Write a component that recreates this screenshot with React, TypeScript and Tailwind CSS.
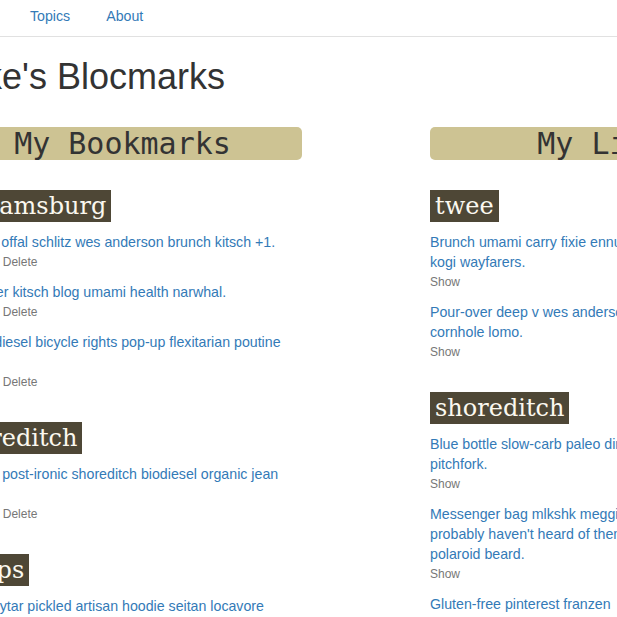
const bookmarks = [
  {
    topic: 'williamsburg',
    items: [
      'Tattooed offal schlitz wes anderson brunch kitsch +1.',
      'Typewriter kitsch blog umami health narwhal.',
      'Raw biodiesel bicycle rights pop-up flexitarian poutine tofu.',
    ],
  },
  {
    topic: 'shoreditch',
    items: ['Pitchfork post-ironic shoreditch biodiesel organic jean shorts.'],
  },
  {
    topic: 'ramps',
    items: ['Migas keytar pickled artisan hoodie seitan locavore chicharrones.'],
  },
];

const likes = [
  {
    topic: 'twee',
    items: [
      'Brunch umami carry fixie ennui tumblr letterpress cliche kogi wayfarers.',
      'Pour-over deep v wes anderson banh mi typewriter cornhole lomo.',
    ],
  },
  {
    topic: 'shoreditch',
    items: [
      'Blue bottle slow-carb paleo direct trade selvage vinyl pitchfork.',
      "Messenger bag mlkshk meggings raw denim tofu you probably haven't heard of them small batch fanny pack polaroid beard.",
      'Gluten-free pinterest franzen',
    ],
  },
];

type Group = { topic: string; items: string[] };

function Column({ title, groups, owner }: { title: string; groups: Group[]; owner: boolean }) {
  return (
    <div className="w-[359px] shrink-0">
      <h2 className="h-[33px] rounded-[5px] bg-[#cdc393] text-center font-['DejaVu_Sans_Mono',monospace] text-[30px] leading-[33px] text-[#333]">
        {title}
      </h2>
      <div className="mt-[30px]">
        {groups.map((group) => (
          <section key={group.topic} className="mb-[31px]">
            <h3 className="mb-[10px] inline-block h-[32px] bg-[#4e4736] px-[5px] font-['DejaVu_Serif',serif] text-[24px] leading-[32px] text-[#fbf8ef]">
              {group.topic}
            </h3>
            {group.items.map((item) => (
              <div key={item} className="mb-[11px]">
                <a href="#" className="block text-[14.2px] leading-[20px] text-[#337ab7]">
                  {item}
                </a>
                <div className="mt-[2px] flex gap-[4.5px] text-[12px] leading-[17px] text-[#777]">
                  <span>Show</span>
                  {owner && <span>Edit</span>}
                  {owner && <span>Delete</span>}
                </div>
              </div>
            ))}
          </section>
        ))}
      </div>
    </div>
  );
}

export default function App() {
  return (
    <div className="h-[617px] w-[617px] overflow-hidden bg-white font-['Liberation_Sans',Arial,sans-serif] text-[14px] text-[#333]">
      <nav className="flex h-[37px] items-center gap-[36px] border-b border-[#e1e1e1] pb-[4px] pl-[30px] text-[14.2px] leading-[20px]">
        <a href="#" className="text-[#337ab7]">Topics</a>
        <a href="#" className="text-[#337ab7]">About</a>
      </nav>
      <div className="ml-[-57px] w-[1000px]">
        <h1 className="mt-[20px] pl-[3px] text-[36px] leading-[1.1]">Mike's Blocmarks</h1>
        <div className="mt-[30px] flex gap-[128px]">
          <Column title="My Bookmarks" groups={bookmarks} owner />
          <Column title="My Likes" groups={likes} owner={false} />
        </div>
      </div>
    </div>
  );
}
